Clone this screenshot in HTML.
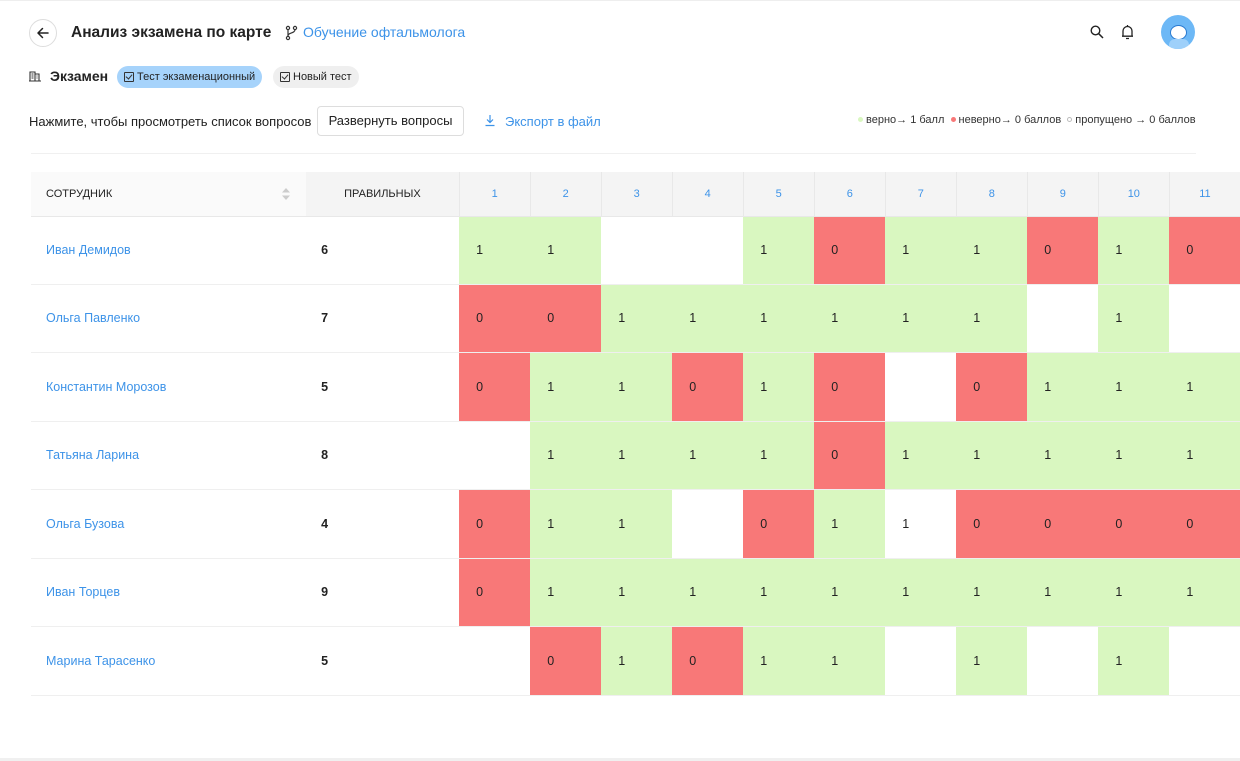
<!DOCTYPE html>
<html><head><meta charset="utf-8"><style>
*{box-sizing:border-box;margin:0;padding:0}
body{width:1240px;height:761px;overflow:hidden;background:#fff;font-family:"Liberation Sans",Roboto,sans-serif;color:#222;position:relative}
.abs{position:absolute}
.topline{left:0;top:0;width:1240px;height:1px;background:#eee}
.botline{left:0;top:758px;width:1240px;height:3px;background:#f0f0f0}
.back{left:29px;top:19px;width:28px;height:28px;border:1px solid #ddd;border-radius:50%}
.title{left:71px;top:24px;font-size:15.5px;font-weight:bold;color:#222}
.link{left:303px;top:24px;font-size:14px;color:#3d93e8}
.exam{left:50px;top:68px;font-size:14px;font-weight:bold}
.chip{top:66px;height:22px;border-radius:11px;font-size:11px;line-height:22px;padding:0 7px 0 20px}
.chip i{position:absolute;left:7px;top:6px;width:10px;height:10px;border:1px solid #333;border-radius:1px}
.chip i:after{content:"";position:absolute;left:2px;top:0px;width:3px;height:5px;border:solid #333;border-width:0 1px 1px 0;transform:rotate(40deg)}
.hint{left:29px;top:114px;font-size:13px}
.btn{left:317px;top:106px;width:147px;height:30px;border:1px solid #ddd;border-radius:4px;font-size:13px;line-height:28px;text-align:center}
.exp{left:505px;top:114px;font-size:13px;color:#3d93e8}
.legend{left:858px;top:114px;font-size:11px;color:#333;white-space:nowrap}
.dot{display:inline-block;width:5px;height:5px;border-radius:50%;margin-right:3px;vertical-align:1px}
.sep{left:31px;top:153px;width:1165px;height:1px;background:#f0f0f0}
table{position:absolute;left:31px;top:172px;border-collapse:collapse;table-layout:fixed;width:1210px}
th{height:44px;background:#f4f4f4;font-size:11px;font-weight:normal;color:#3d93e8;border-right:1px solid #e8e8e8;border-bottom:1px solid #e8e8e8}
th.n{background:#fafafa;color:#222;text-align:left;padding-left:15px;position:relative;border-right:none}
th.c{color:#222}
td{font-size:12.5px;border-bottom:1px solid #efefef;padding-left:17px}
td.nm{color:#3d93e8;font-size:12.5px;padding-left:15px}
td.cr{font-weight:bold;padding-left:15px;text-align:left}
td.g{background:#d9f7c0}
td.r{background:#f87878}
</style></head><body>
<div class="abs topline"></div>
<div class="abs back"><svg width="26" height="26" viewBox="0 0 26 26" style="position:absolute;left:0;top:0"><path d="M18 13H8M12.5 8.5L8 13l4.5 4.5" fill="none" stroke="#222" stroke-width="1.5" stroke-linecap="round" stroke-linejoin="round"/></svg></div>
<div class="abs title">Анализ экзамена по карте</div>
<svg class="abs" style="left:285px;top:25px" width="14" height="16" viewBox="0 0 14 16"><circle cx="3" cy="3" r="1.6" fill="none" stroke="#333" stroke-width="1.2"/><circle cx="3" cy="13" r="1.6" fill="none" stroke="#333" stroke-width="1.2"/><circle cx="10" cy="3" r="1.6" fill="none" stroke="#333" stroke-width="1.2"/><path d="M3 4.6v6.8M10 4.6c0 4-7 3-7 6" fill="none" stroke="#333" stroke-width="1.2"/></svg>
<div class="abs link">Обучение офтальмолога</div>
<svg class="abs" style="left:1090px;top:25px" width="14" height="14" viewBox="0 0 14 14"><circle cx="5.5" cy="5.5" r="4.3" fill="none" stroke="#222" stroke-width="1.4"/><path d="M8.7 8.7L13 13" stroke="#222" stroke-width="1.5"/></svg>
<svg class="abs" style="left:1121px;top:24px" width="13" height="16" viewBox="0 0 13 16"><path d="M2 12V7a4.5 4.5 0 0 1 9 0v5M1 12.2h11M5 14.5h3M6.5 1v1.3" fill="none" stroke="#222" stroke-width="1.3"/></svg>
<div class="abs" style="left:1161px;top:15px;width:34px;height:34px;border-radius:50%;background:#6db8f6;overflow:hidden"><div style="position:absolute;left:9px;top:10px;width:17px;height:15px;border-radius:50%;background:#fff;border:1.5px solid #2a7ad0"></div><div style="position:absolute;left:8px;top:24px;width:20px;height:12px;border-radius:6px;background:#9ed0fa"></div></div>
<svg class="abs" style="left:29px;top:70px" width="12" height="12" viewBox="0 0 12 12"><path d="M1 11V2h5v9M6 4h4v7M0 11h12M2.5 4h2M2.5 6h2M2.5 8h2M7.5 6h1M7.5 8h1" fill="none" stroke="#333" stroke-width="1.1"/></svg>
<div class="abs exam">Экзамен</div>
<div class="abs chip" style="left:117px;background:#a6d3fb"><i></i>Тест экзаменационный</div>
<div class="abs chip" style="left:273px;background:#efefef"><i></i>Новый тест</div>
<div class="abs hint">Нажмите, чтобы просмотреть список вопросов</div>
<div class="abs btn">Развернуть вопросы</div>
<svg class="abs" style="left:484px;top:114px" width="12" height="13" viewBox="0 0 12 13"><path d="M6 1v7M3 5.5L6 8.5 9 5.5M1.5 11.5h9" fill="none" stroke="#3d93e8" stroke-width="1.2"/></svg>
<div class="abs exp">Экспорт в файл</div>
<div class="abs legend"><span class="dot" style="background:#d9f7c0"></span>верно→ 1 балл &nbsp;<span class="dot" style="background:#f87878"></span>неверно→ 0 баллов &nbsp;<span class="dot" style="border:1px solid #bbb"></span>пропущено → 0 баллов</div>
<div class="abs sep"></div>
<table>
<colgroup><col style="width:275px"><col style="width:153px"><col style="width:71px"><col style="width:71px"><col style="width:71px"><col style="width:71px"><col style="width:71px"><col style="width:71px"><col style="width:71px"><col style="width:71px"><col style="width:71px"><col style="width:71px"><col style="width:71px"></colgroup>
<tr><th class="n">СОТРУДНИК<svg style="position:absolute;left:251px;top:16px" width="8" height="12" viewBox="0 0 8 12"><path d="M4 0L8 4.5H0zM4 12L0 7.5h8z" fill="#ccc"/></svg></th><th class="c">ПРАВИЛЬНЫХ</th><th>1</th><th>2</th><th>3</th><th>4</th><th>5</th><th>6</th><th>7</th><th>8</th><th>9</th><th>10</th><th>11</th></tr>
<tr style="height:68px"><td class="nm">Иван Демидов</td><td class="cr">6</td><td class="g">1</td><td class="g">1</td><td></td><td></td><td class="g">1</td><td class="r">0</td><td class="g">1</td><td class="g">1</td><td class="r">0</td><td class="g">1</td><td class="r">0</td></tr>
<tr style="height:68px"><td class="nm">Ольга Павленко</td><td class="cr">7</td><td class="r">0</td><td class="r">0</td><td class="g">1</td><td class="g">1</td><td class="g">1</td><td class="g">1</td><td class="g">1</td><td class="g">1</td><td></td><td class="g">1</td><td></td></tr>
<tr style="height:69px"><td class="nm">Константин Морозов</td><td class="cr">5</td><td class="r">0</td><td class="g">1</td><td class="g">1</td><td class="r">0</td><td class="g">1</td><td class="r">0</td><td></td><td class="r">0</td><td class="g">1</td><td class="g">1</td><td class="g">1</td></tr>
<tr style="height:68px"><td class="nm">Татьяна Ларина</td><td class="cr">8</td><td></td><td class="g">1</td><td class="g">1</td><td class="g">1</td><td class="g">1</td><td class="r">0</td><td class="g">1</td><td class="g">1</td><td class="g">1</td><td class="g">1</td><td class="g">1</td></tr>
<tr style="height:69px"><td class="nm">Ольга Бузова</td><td class="cr">4</td><td class="r">0</td><td class="g">1</td><td class="g">1</td><td></td><td class="r">0</td><td class="g">1</td><td>1</td><td class="r">0</td><td class="r">0</td><td class="r">0</td><td class="r">0</td></tr>
<tr style="height:68px"><td class="nm">Иван Торцев</td><td class="cr">9</td><td class="r">0</td><td class="g">1</td><td class="g">1</td><td class="g">1</td><td class="g">1</td><td class="g">1</td><td class="g">1</td><td class="g">1</td><td class="g">1</td><td class="g">1</td><td class="g">1</td></tr>
<tr style="height:69px"><td class="nm">Марина Тарасенко</td><td class="cr">5</td><td></td><td class="r">0</td><td class="g">1</td><td class="r">0</td><td class="g">1</td><td class="g">1</td><td></td><td class="g">1</td><td></td><td class="g">1</td><td></td></tr>
</table>
<div class="abs botline"></div>
</body></html>
